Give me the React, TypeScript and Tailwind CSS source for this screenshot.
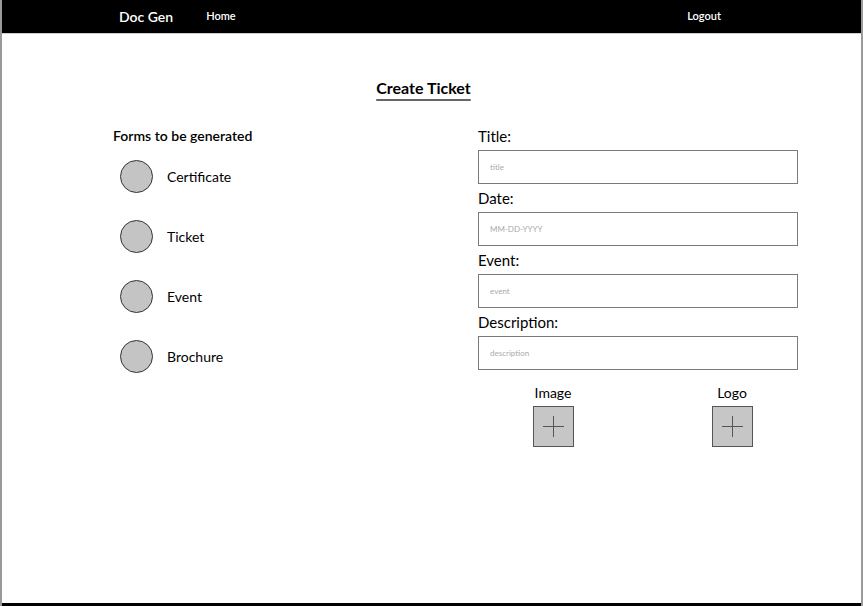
import React from 'react';

const forms = ['Certificate', 'Ticket', 'Event', 'Brochure'];

const fields = [
  { label: 'Title:', placeholder: 'title' },
  { label: 'Date:', placeholder: 'MM-DD-YYYY' },
  { label: 'Event:', placeholder: 'event' },
  { label: 'Description:', placeholder: 'description' },
];

const PlusBox: React.FC<{ label: string }> = ({ label }) => (
  <div className="flex w-[40px] flex-col items-center">
    <span className="h-[36px] whitespace-nowrap pt-[14px] text-[14px] leading-[18px] text-black">{label}</span>
    <div className="relative h-[41px] w-[41px] border border-[#555] bg-[#c6c6c6]">
      <div className="absolute left-[9px] top-[19px] h-px w-[21px] bg-[#555]" />
      <div className="absolute left-[19px] top-[9px] h-[21px] w-px bg-[#555]" />
    </div>
  </div>
);

export default function App() {
  return (
    <div
      className="flex h-[606px] w-full flex-col border-x-2 border-[#9a9a9a] bg-white text-black"
      style={{ fontFamily: 'Lato, "Open Sans", sans-serif' }}
    >
      <nav className="flex h-[34px] shrink-0 items-center border-b border-[#cfcfcf] bg-black pb-[1px] pl-[117px] pr-[140px] text-white">
        <span className="text-[14px] font-semibold">Doc Gen</span>
        <span className="ml-[33px] text-[11px] font-semibold">Home</span>
        <span className="ml-auto text-[11px] font-semibold">Logout</span>
      </nav>

      <main className="flex flex-1 flex-col">
        <div className="flex justify-center pr-[16px] pt-[44px]">
          <h1 className="text-[16px] font-bold leading-[20px] underline decoration-[#666] decoration-[1.5px] underline-offset-[5px]">
            Create Ticket
          </h1>
        </div>

        <div className="mt-[24px] flex">
          <section className="ml-[111px] w-[365px]">
            <h2 className="flex h-[26px] items-center text-[14px] font-semibold">Forms to be generated</h2>
            <ul className="mt-[12px] flex flex-col gap-[27px] pl-[7px]">
              {forms.map((f) => (
                <li key={f} className="flex h-[33px] items-center">
                  <span className="h-[33px] w-[33px] rounded-full border border-[#333] bg-[#c4c4c4]" />
                  <span className="ml-[14px] text-[14px]">{f}</span>
                </li>
              ))}
            </ul>
          </section>

          <section className="w-[320px]">
            {fields.map((f) => (
              <div key={f.label}>
                <label className="flex h-[28px] items-center text-[15px]">{f.label}</label>
                <div className="flex h-[34px] items-center border border-[#7a7a7a] pl-[11px] text-[8px] text-[#aaa]">
                  {f.placeholder}
                </div>
              </div>
            ))}
            <div className="flex gap-[139px] pl-[55px]">
              <PlusBox label="Image" />
              <PlusBox label="Logo" />
            </div>
          </section>
        </div>
      </main>

      <div className="h-[3px] shrink-0 bg-black" />
    </div>
  );
}
